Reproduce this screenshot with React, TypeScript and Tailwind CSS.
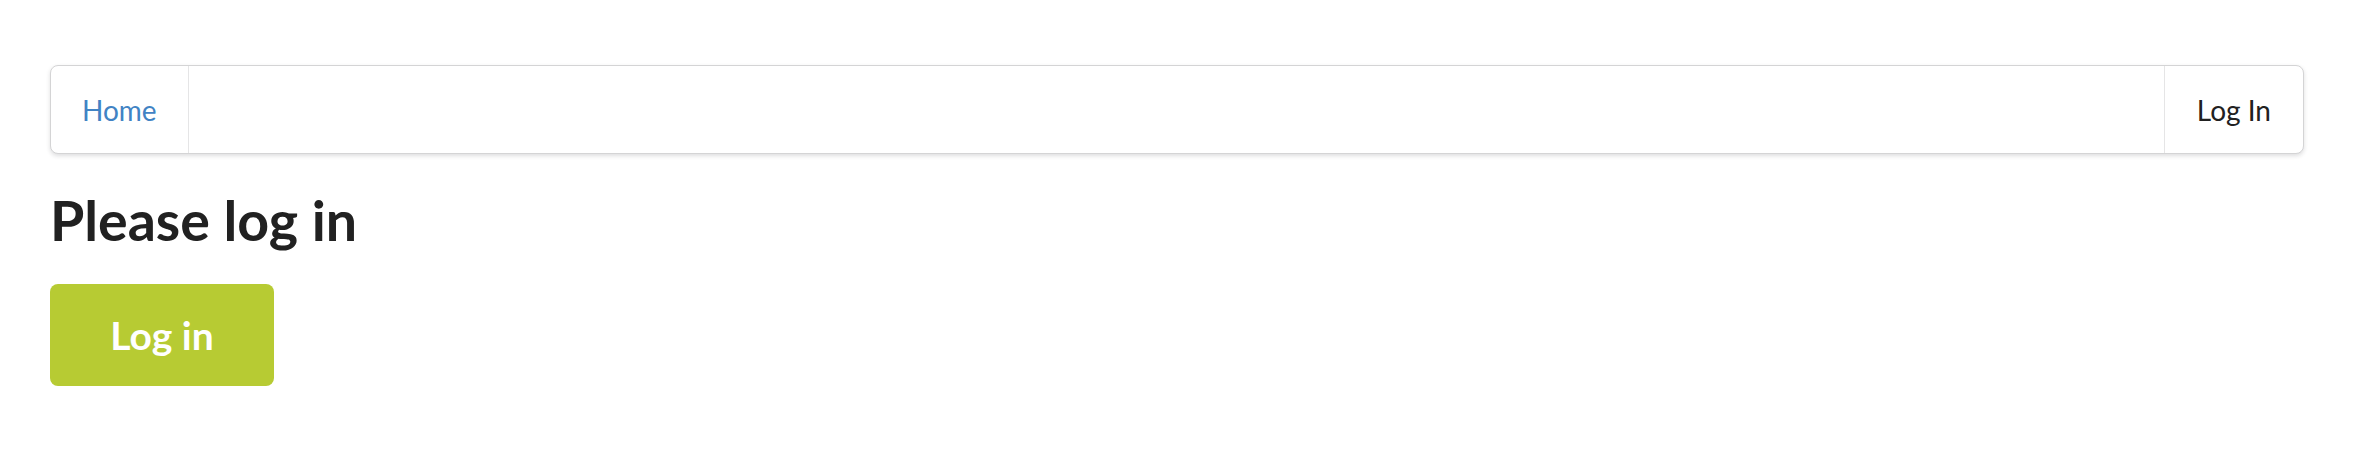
export default function App() {
  return (
    <div className="min-h-screen bg-white font-['Lato','Open_Sans',sans-serif] text-[#212121]">
      <div className="ml-[50px] w-[2254px] pt-[65px]">
        {/* Menu */}
        <nav className="flex h-[89px] items-stretch rounded-[8px] border border-[#d4d4d5] bg-white shadow-[0_2px_4px_0_rgba(34,36,38,0.15)]">
          <a className="flex items-center border-r border-[#e5e5e6] px-[31px] text-[28px] leading-none text-[#4183c4]">
            Home
          </a>
          <div className="flex-1" />
          <a className="flex items-center border-l border-[#e5e5e6] px-[32px] text-[28px] leading-none text-[#212121]">
            Log In
          </a>
        </nav>

        <h1 className="mt-[30px] text-[55.5px] font-bold leading-[72px] text-[#212121]">Please log in</h1>

        <button className="mt-[28px] flex h-[102px] w-[224px] items-center justify-center rounded-[8px] bg-[#b7cb33] text-[39px] font-bold leading-none text-white">
          Log in
        </button>
      </div>
    </div>
  );
}
